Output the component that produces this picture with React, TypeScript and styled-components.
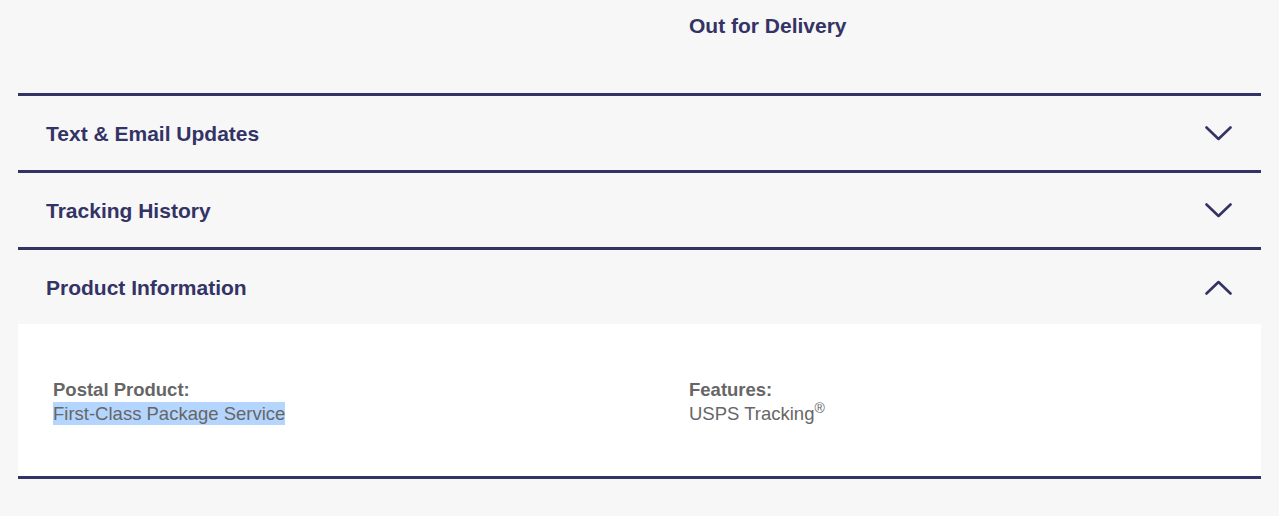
import React from "react";
import styled, { createGlobalStyle } from "styled-components";

const Global = createGlobalStyle`
  html, body { margin: 0; padding: 0; background: #f7f7f7; }
  body { font-family: "Liberation Sans", Arial, Helvetica, sans-serif; }
`;

const navy = "#333366";

const Page = styled.div`
  padding: 0 18px;
  background: #f7f7f7;
  min-height: 516px;
  box-sizing: border-box;
`;

const StatusRow = styled.div`
  display: grid;
  grid-template-columns: 671px 1fr;
  height: 93px;
  padding-top: 14px;
  box-sizing: border-box;
`;

const Status = styled.h2`
  grid-column: 2;
  margin: 0;
  font-size: 21px;
  line-height: 24px;
  font-weight: 700;
  color: ${navy};
`;

const Section = styled.section<{ $last?: boolean }>`
  border-top: 3px solid ${navy};
  ${(p) => (p.$last ? `border-bottom: 3px solid ${navy};` : "")}
`;

const Header = styled.div`
  display: flex;
  align-items: center;
  justify-content: space-between;
  height: 74px;
  padding: 1px 29px 0 28px;
  box-sizing: border-box;
`;

const Title = styled.h3`
  margin: 0;
  font-size: 21px;
  line-height: 24px;
  font-weight: 700;
  color: ${navy};
`;

const Chevron = ({ up }: { up?: boolean }) => (
  <svg width="27" height="15" viewBox="0 0 27 15" fill="none">
    <polyline
      points={up ? "1.5,13.5 13.5,2 25.5,13.5" : "1.5,1.5 13.5,13 25.5,1.5"}
      stroke={navy}
      strokeWidth="2.6"
      strokeLinecap="round"
      strokeLinejoin="round"
    />
  </svg>
);

const Panel = styled.div`
  background: #ffffff;
  display: grid;
  grid-template-columns: 636px 1fr;
  padding: 54px 35px 50px;
`;

const Field = styled.div`
  font-size: 18.5px;
  line-height: 24px;
  color: #666666;
`;

const Label = styled.div`
  font-weight: 700;
`;

const Value = styled.div``;

const Selected = styled.span`
  background: #b4d5fe;
  padding: 1px 0;
`;

const Sup = styled.sup`
  font-size: 14px;
  line-height: 0;
`;

export default function App() {
  return (
    <>
      <Global />
      <Page>
        <StatusRow>
          <Status>Out for Delivery</Status>
        </StatusRow>
        <Section>
          <Header>
            <Title>Text &amp; Email Updates</Title>
            <Chevron />
          </Header>
        </Section>
        <Section>
          <Header>
            <Title>Tracking History</Title>
            <Chevron />
          </Header>
        </Section>
        <Section $last>
          <Header>
            <Title>Product Information</Title>
            <Chevron up />
          </Header>
          <Panel>
            <Field>
              <Label>Postal Product:</Label>
              <Value>
                <Selected>First-Class Package Service</Selected>
              </Value>
            </Field>
            <Field>
              <Label>Features:</Label>
              <Value>
                USPS Tracking<Sup>®</Sup>
              </Value>
            </Field>
          </Panel>
        </Section>
      </Page>
    </>
  );
}
